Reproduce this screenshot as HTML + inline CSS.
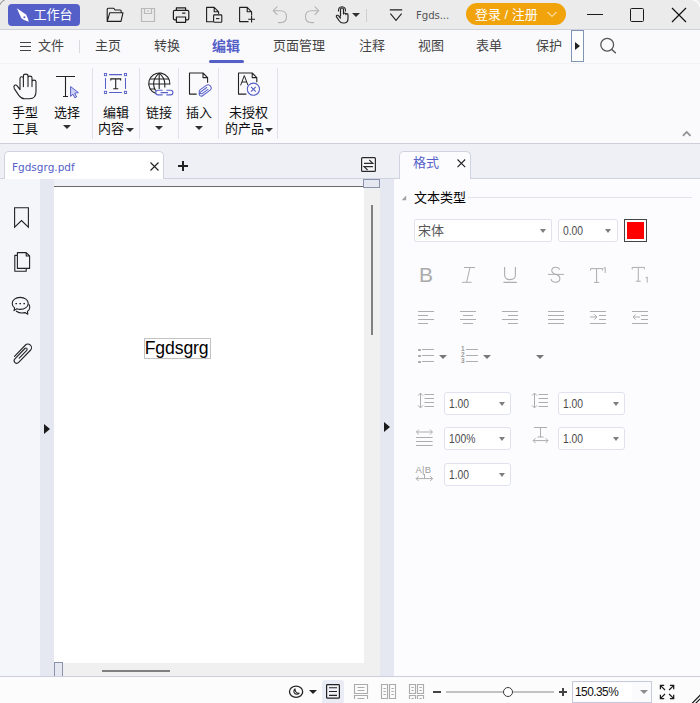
<!DOCTYPE html>
<html lang="zh-CN">
<head>
<meta charset="utf-8">
<title>Fgdsgrg.pdf</title>
<style>
*{box-sizing:border-box;margin:0;padding:0}
html,body{width:700px;height:703px;overflow:hidden;background:#fafafc}
body{position:relative;font-family:"Liberation Sans","Noto Sans CJK SC",sans-serif;font-size:13px;color:#222;-webkit-font-smoothing:antialiased}
.a{position:absolute}
.t{position:absolute;white-space:nowrap;line-height:1}
svg{position:absolute;overflow:visible}
.sep{position:absolute;width:1px;background:#e1e2ea}
.sel{position:absolute;height:23px;background:#fff;border:1px solid #e0e3ef;border-radius:3px}
.sel span{position:absolute;left:4px;top:5px;font-size:12px;line-height:1;color:#333}
.sel i{position:absolute;right:5px;top:9px;width:0;height:0;border-left:3.7px solid transparent;border-right:3.7px solid transparent;border-top:4.2px solid #7d7d7d}
.dd{position:absolute;width:0;height:0;border-left:4.1px solid transparent;border-right:4.1px solid transparent;border-top:4.5px solid #303030;margin-left:-0.4px}
.m{top:39px;font-size:13px;color:#444}
.r{font-size:13px;color:#111}
.sel span.n{font-size:12px;top:5px;left:3.5px;color:#4a4a4a;display:inline-block;transform:scaleX(0.86);transform-origin:left center}
</style>
</head>
<body>
<!-- ===== title bar ===== -->
<div class="a" id="titlebar" style="left:0;top:0;width:700px;height:29px;background:#ebebeb"></div>

<!-- window corner -->
<svg style="left:0;top:0" width="8" height="8" viewBox="0 0 8 8"><path d="M0 4.8 Q1 1 4.8 0" fill="none" stroke="#8a8a8a" stroke-width="1"/></svg>
<svg style="left:692px;top:0" width="8" height="8" viewBox="0 0 8 8"><path d="M1 0 Q7 1 8 7" fill="none" stroke="#fbfbfb" stroke-width="1.6"/></svg>
<!-- workbench button -->
<div class="a" style="left:8px;top:4px;width:72px;height:22px;background:#555fc8;border-radius:4px"></div>
<svg style="left:16px;top:8px" width="14" height="14" viewBox="0 0 14 14"><path d="M0.8 0.3 L10 6.6 Q12 10 12.8 13.8 Q8.6 12.8 5.4 10.2 Z" fill="#fff"/><circle cx="8.4" cy="9.2" r="1" fill="#555fc8"/></svg>
<div class="t" style="left:33.5px;top:7.5px;font-size:13px;color:#fff">工作台</div>
<!-- open folder -->
<svg style="left:106px;top:7px" width="18" height="16" viewBox="0 0 18 16"><path d="M1.2 14.4 V2.2 Q1.2 1.2 2.2 1.2 H7.8 L9 3 H14.2 Q15.2 3 15.2 4 V5.7 M1.2 14.4 L3.8 5.7 H17 L15 14.4 Z" fill="none" stroke="#1e1e1e" stroke-width="1.1" stroke-linejoin="round"/></svg>
<!-- save (disabled) -->
<svg style="left:140px;top:7px" width="16" height="16" viewBox="0 0 16 16"><path d="M1.5 1.5 H14.5 V14.5 H1.5 Z M4.5 1.5 V6.5 H11.5 V1.5 M7 4 H9" fill="none" stroke="#b9b9b9" stroke-width="1.2"/></svg>
<!-- print -->
<svg style="left:172px;top:7px" width="18" height="16" viewBox="0 0 18 16"><path d="M4.4 3.4 V0.8 H13.6 V3.4 M4.4 12.8 H2.8 Q1.4 12.8 1.4 11.4 V4.8 Q1.4 3.4 2.8 3.4 H15.4 Q16.8 3.4 16.8 4.8 V11.4 Q16.8 12.8 15.4 12.8 H13.6 M4.4 10 H13.6 V15.3 H4.4 Z M10.2 6.2 H13.4" fill="none" stroke="#1e1e1e" stroke-width="1.2" stroke-linejoin="round"/></svg>
<!-- doc with box -->
<svg style="left:205px;top:6px" width="18" height="18" viewBox="0 0 18 18"><path d="M8 15.8 H1.6 V1.4 H9.2 L13.6 5.8 V8 M9.2 1.4 V5.8 H13.6" fill="none" stroke="#1e1e1e" stroke-width="1.1" stroke-linejoin="round"/><rect x="8.6" y="8.9" width="8.2" height="7.4" rx="0.8" fill="none" stroke="#1e1e1e" stroke-width="1.1"/><path d="M11 12.6 H14.4" stroke="#1e1e1e" stroke-width="1.1"/></svg>
<!-- new doc -->
<svg style="left:238px;top:6px" width="18" height="18" viewBox="0 0 18 18"><path d="M10.5 15.6 H1.6 V1.4 H9.2 L13.6 5.8 V9.5 M9.2 1.4 V5.8 H13.6" fill="none" stroke="#1e1e1e" stroke-width="1.1" stroke-linejoin="round"/><path d="M13.6 9.8 V16.6 M10.2 13.2 H17" stroke="#1e1e1e" stroke-width="1.1"/></svg>
<!-- undo -->
<svg style="left:272px;top:5.6px" width="16" height="18" viewBox="0 0 16 18"><path d="M5 0.9 L1.2 4.7 L5 8.5 M1.4 4.7 H8.3 Q14.5 4.7 14.5 10.7 Q14.5 16.6 8.3 16.6 H6.4" fill="none" stroke="#b4b4b4" stroke-width="1.1" stroke-linejoin="round" stroke-linecap="round"/></svg>
<!-- redo -->
<svg style="left:304px;top:5.6px" width="16" height="18" viewBox="0 0 16 18"><path d="M11 0.9 L14.8 4.7 L11 8.5 M14.6 4.7 H7.7 Q1.5 4.7 1.5 10.7 Q1.5 16.6 7.7 16.6 H9.6" fill="none" stroke="#b4b4b4" stroke-width="1.1" stroke-linejoin="round" stroke-linecap="round"/></svg>
<!-- hand pointer -->
<svg style="left:335px;top:6px" width="15" height="18" viewBox="0 0 15 18"><path d="M5.5 10 V3.5 Q5.5 2 7 2 Q8.5 2 8.5 3.5 V8 M8.5 8 Q8.5 7 9.7 7 Q10.8 7 10.8 8.3 M10.8 8.6 Q10.8 7.7 11.9 7.7 Q13 7.7 13 9 V12.5 Q13 17 9 17 H8 Q5.5 17 4 14.5 L1.5 10.8 Q1 9.8 2 9.3 Q3 9 3.8 10 L5.5 12" fill="none" stroke="#222" stroke-width="1.2" stroke-linejoin="round" stroke-linecap="round"/><path d="M3.5 5.5 Q3 1 7 0.8 Q11 1 10.5 5.5" fill="none" stroke="#222" stroke-width="1.1"/></svg>
<div class="dd" style="left:352px;top:13px"></div>
<div class="sep" style="left:366px;top:9px;height:13px;background:#cfcfcf"></div>
<!-- customize -->
<svg style="left:388px;top:8px" width="15" height="14" viewBox="0 0 15 14"><path d="M1.8 1.9 H14.2 M2.4 5.6 L8 12.4 L13.6 5.6" fill="none" stroke="#222" stroke-width="1.1"/></svg>
<div class="t" style="left:416px;top:11px;font-size:10.2px;font-family:'DejaVu Sans','Liberation Sans',sans-serif;color:#555;letter-spacing:-0.1px">Fgds...</div>
<!-- login -->
<div class="a" style="left:466px;top:3px;width:100px;height:22px;background:#f0a30a;border-radius:11px"></div>
<div class="t" style="left:475px;top:7.5px;font-size:13px;color:#fff">登录 / 注册</div>
<svg style="left:547px;top:11px" width="10" height="7" viewBox="0 0 10 7"><path d="M0.5 1 L5 5.5 L9.5 1" fill="none" stroke="#fff" stroke-width="1"/></svg>
<!-- window controls -->
<div class="a" style="left:587px;top:13.6px;width:16.4px;height:1.1px;background:#1a1a1a"></div>
<div class="a" style="left:629.8px;top:8px;width:14.6px;height:14px;border:1.2px solid #1a1a1a;border-radius:1.6px"></div>
<svg style="left:671px;top:7px" width="16" height="16" viewBox="0 0 16 16"><path d="M1 1 L15 15 M15 1 L1 15" stroke="#111" stroke-width="1.2"/></svg>
<div class="a" style="left:0;top:29px;width:700px;height:1px;background:#cdd1dc"></div>

<!-- ===== menu bar + ribbon ===== -->
<div class="a" id="menubar" style="left:0;top:30px;width:700px;height:113px;background:#fafafc"></div>

<!-- menu bar -->
<div class="a" style="left:20px;top:42px;width:11px;height:1px;background:#444"></div>
<div class="a" style="left:20px;top:46px;width:11px;height:1px;background:#444"></div>
<div class="a" style="left:20px;top:50px;width:11px;height:1px;background:#444"></div>
<div class="t m" style="left:38px">文件</div>
<div class="sep" style="left:79px;top:40px;height:13px;background:#d9d9de"></div>
<div class="t m" style="left:95px">主页</div>
<div class="t m" style="left:154px">转换</div>
<div class="t" style="left:212px;top:38.5px;font-size:14px;font-weight:bold;color:#555fc8">编辑</div>
<div class="a" style="left:208.5px;top:59.5px;width:35.5px;height:3.2px;background:#555fc8;border-radius:1.6px"></div>
<div class="t m" style="left:273px">页面管理</div>
<div class="t m" style="left:359px">注释</div>
<div class="t m" style="left:418px">视图</div>
<div class="t m" style="left:476px">表单</div>
<div class="t m" style="left:536px">保护</div>
<div class="a" style="left:571px;top:30px;width:13px;height:32px;border:1px solid #8094b4;background:#fdfdfe"></div>
<div class="a" style="left:574.8px;top:41.5px;width:0;height:0;border-top:4.5px solid transparent;border-bottom:4.5px solid transparent;border-left:5.8px solid #222"></div>
<svg style="left:599px;top:37px" width="19" height="18" viewBox="0 0 19 18"><circle cx="8.2" cy="7.8" r="6.4" fill="none" stroke="#555" stroke-width="1.3"/><path d="M12.8 12.4 L16.4 15.8" stroke="#555" stroke-width="1.4" stroke-linecap="round"/></svg>

<!-- ribbon -->
<div class="a" style="left:0;top:63px;width:700px;height:1px;background:#f3f3f6"></div>
<div class="sep" style="left:92px;top:68px;height:71px"></div>
<div class="sep" style="left:139px;top:68px;height:71px"></div>
<div class="sep" style="left:178px;top:68px;height:71px"></div>
<div class="sep" style="left:218px;top:68px;height:71px"></div>
<div class="sep" style="left:277px;top:68px;height:71px"></div>

<!-- hand tool -->
<svg style="left:13px;top:73px" width="26" height="27" viewBox="0 0 26 27"><path d="M7 16.5 V5.6 Q7 3.8 8.7 3.8 Q10.4 3.8 10.4 5.6 V13.6 M10.4 5.5 V2.9 Q10.4 1.1 12.7 1.1 Q15 1.1 15 2.9 V13.6 M15 4.8 Q15 3.1 17 3.1 Q19 3.1 19 4.8 V13.6 M19 8.7 Q19 7.1 21 7.1 Q23 7.1 23 8.7 V18.5 Q23 25.8 16.5 25.8 H11.5 Q8.4 25.8 5.8 22.4 L1.3 15.6 Q0.2 13.4 1.6 12.3 Q3.2 11.5 4.4 13.1 L7 16.6" fill="none" stroke="#222" stroke-width="1.1" stroke-linejoin="round" stroke-linecap="round"/></svg>
<div class="t r" style="left:12px;top:106px">手型</div>
<div class="t r" style="left:12px;top:122px">工具</div>
<!-- select -->
<svg style="left:55px;top:74px" width="26" height="26" viewBox="0 0 26 26"><path d="M1 2.5 H20 M10.5 2.5 V22.5 M8 22.5 H13" fill="none" stroke="#222" stroke-width="1.1"/><path d="M15.6 12.6 L23.4 18.6 L19.8 19.2 L21.6 23 L19.8 23.8 L18 20.2 L15.6 22.4 Z" fill="#cfd3f6" stroke="#555fc8" stroke-width="1" stroke-linejoin="round"/></svg>
<div class="t r" style="left:54px;top:106px">选择</div>
<div class="dd" style="left:63px;top:125px"></div>
<!-- edit content -->
<svg style="left:103px;top:72px" width="26" height="23" viewBox="0 0 26 23"><g fill="none" stroke="#555fc8" stroke-width="1.05"><rect x="1.4" y="1.5" width="2.2" height="2.2" stroke-width="0.9"/><rect x="21.4" y="1.5" width="2.2" height="2.2" stroke-width="0.9"/><rect x="1.4" y="19.3" width="2.2" height="2.2" stroke-width="0.9"/><rect x="21.4" y="19.3" width="2.2" height="2.2" stroke-width="0.9"/><path d="M6.1 2.6 H19 M6.1 20.4 H19 M2.5 6 V17.1 M22.5 6 V17.1"/></g><path d="M7.8 8.6 V6.9 H17.6 V8.6 M12.7 6.9 V16.8 M10.2 16.8 H15.3" fill="none" stroke="#222" stroke-width="1.1"/></svg>
<div class="t r" style="left:103px;top:106px">编辑</div>
<div class="t r" style="left:98px;top:122px">内容</div>
<div class="dd" style="left:126px;top:128px"></div>
<!-- link -->
<svg style="left:147px;top:72px" width="27" height="25" viewBox="0 0 27 25"><g fill="none" stroke="#222" stroke-width="1.1"><path d="M9 21.6 A10.6 10.6 0 1 1 22.9 12.5"/><path d="M12.2 1.2 Q6.6 6 6.6 11.8 Q6.6 16 8.6 18.6"/><path d="M12.2 1.2 Q17.8 6 17.8 11.8 V15.6"/><path d="M12.2 1.2 V17"/><path d="M2.8 7 H21.6 M1.6 12 H22.8 M2.8 17 H8"/></g><g fill="none" stroke="#555fc8" stroke-width="1.1"><path d="M15.6 18.3 H11 A2.3 2.3 0 0 0 11 22.9 H15.6 M19.4 18.3 H23.6 A2.3 2.3 0 0 1 23.6 22.9 H19.4 M13.6 20.6 H21"/></g></svg>
<div class="t r" style="left:146px;top:106px">链接</div>
<div class="dd" style="left:155px;top:126px"></div>
<!-- insert -->
<svg style="left:188px;top:72px" width="25" height="26" viewBox="0 0 25 26"><path d="M8.7 22.1 H1.5 V1 H15 L19.6 5.6 V10.8 M15 1 V5.6 H19.6" fill="none" stroke="#222" stroke-width="1.1" stroke-linejoin="round"/><g transform="translate(16.6 18.4) rotate(-36)" fill="none" stroke="#555fc8" stroke-width="1"><path d="M3.8 -1.1 H-4.8 A2.1 2.1 0 0 0 -4.8 3.1 H4.2 A3.1 3.1 0 0 0 4.2 -3.1 H-3.4 A1 1 0 0 0 -3.4 1.1 H3.8"/></g></svg>
<div class="t r" style="left:186px;top:106px">插入</div>
<div class="dd" style="left:195px;top:126px"></div>
<!-- unlicensed -->
<svg style="left:237px;top:72px" width="25" height="26" viewBox="0 0 25 26"><path d="M9.4 22.1 H1.5 V1 H15.2 L19.8 5.6 V10.2 M15.2 1 V5.6 H19.8" fill="none" stroke="#222" stroke-width="1.1" stroke-linejoin="round"/><path d="M3.6 13.4 L7.3 3.6 L11 13.4 M4.9 10 H9.7" fill="none" stroke="#222" stroke-width="1"/><circle cx="16.4" cy="17.2" r="6.1" fill="#fafafc" stroke="#555fc8" stroke-width="1.1"/><path d="M14 14.8 L18.8 19.6 M18.8 14.8 L14 19.6" stroke="#555fc8" stroke-width="1.1"/></svg>
<div class="t r" style="left:229px;top:106px">未授权</div>
<div class="t r" style="left:225px;top:122px">的产品</div>
<div class="dd" style="left:265px;top:128px"></div>
<!-- collapse chevron -->
<svg style="left:681px;top:129px" width="12" height="8" viewBox="0 0 12 8"><path d="M1.9 6.9 L5.7 3 L9.5 6.9" fill="none" stroke="#8f8f8f" stroke-width="1.7"/></svg>

<!-- ===== tab strip ===== -->
<div class="a" style="left:0;top:143px;width:700px;height:1px;background:#cdd0dc"></div>
<div class="a" id="tabstrip" style="left:0;top:144px;width:700px;height:34px;background:#eff0f5"></div>
<div class="a" style="left:0;top:178px;width:700px;height:1px;background:#cfd3df"></div>
<!-- doc tab -->
<div class="a" style="left:4px;top:151px;width:160px;height:28px;background:#fff;border:1px solid #cfd3df;border-bottom:none;border-radius:5px 5px 0 0"></div>
<div class="t" style="left:12px;top:162px;font-size:10.5px;font-family:'DejaVu Sans','Liberation Sans',sans-serif;color:#555fc8">Fgdsgrg.pdf</div>
<svg style="left:150px;top:162px" width="9" height="9" viewBox="0 0 9 9"><path d="M0.5 0.5 L8.5 8.5 M8.5 0.5 L0.5 8.5" stroke="#222" stroke-width="1.1"/></svg>
<div class="a" style="left:178px;top:165px;width:10px;height:2px;background:#222"></div>
<div class="a" style="left:182px;top:161px;width:2px;height:10px;background:#222"></div>
<!-- swap icon -->
<svg style="left:361px;top:157px" width="16" height="16" viewBox="0 0 16 16"><rect x="0.6" y="0.6" width="13.8" height="13.8" rx="0.9" fill="#f7f7fa" stroke="#2a2a2a" stroke-width="1.2"/><path d="M3 6.4 H11.9 L8.3 3 M11.9 9.6 H3 L6.6 13" fill="none" stroke="#2a2a2a" stroke-width="1.1"/></svg>
<!-- format tab -->
<div class="a" style="left:399px;top:151px;width:72px;height:28px;background:#fcfcfe;border:1px solid #cfd3df;border-bottom:none;border-radius:5px 5px 0 0"></div>
<div class="t" style="left:413px;top:155.5px;font-size:13px;color:#555fc8">格式</div>
<svg style="left:457px;top:159px" width="9" height="9" viewBox="0 0 9 9"><path d="M0.5 0.5 L8.2 8.2 M8.2 0.5 L0.5 8.2" stroke="#222" stroke-width="1.1"/></svg>

<!-- ===== main ===== -->
<div class="a" id="leftbar" style="left:0;top:179px;width:40px;height:497px;background:#f5f6fa"></div>
<div class="a" style="left:40px;top:179px;width:14px;height:497px;background:#e6e8f1"></div>
<div class="a" style="left:54px;top:179px;width:310px;height:7px;background:#f0f1f6"></div>
<div class="a" style="left:54px;top:186px;width:310px;height:1px;background:#6a6a6a"></div>
<div class="a" id="page" style="left:54px;top:187px;width:310px;height:476px;background:#fff"></div>
<div class="a" style="left:364px;top:179px;width:16px;height:497px;background:#f0f0f0"></div>
<div class="a" style="left:363px;top:179px;width:17px;height:9px;background:#e6e8f1;border:1px solid #8a92ac"></div>
<div class="a" style="left:371px;top:205px;width:2px;height:130px;background:#808080"></div>
<div class="a" style="left:380px;top:179px;width:14px;height:497px;background:#e6e8f1"></div>
<div class="a" id="rpanel" style="left:394px;top:179px;width:306px;height:497px;background:#fcfcfe"></div>
<!-- bottom scrollbar -->
<div class="a" style="left:54px;top:663px;width:310px;height:13px;background:#f0f0f0"></div>
<div class="a" style="left:54px;top:662px;width:9px;height:15px;background:#e6e8f1;border:1px solid #8a92ac;border-bottom:none"></div>
<div class="a" style="left:102px;top:670px;width:68px;height:2px;background:#808080"></div>
<!-- splitter arrows -->
<div class="a" style="left:44px;top:424px;width:0;height:0;border-top:5px solid transparent;border-bottom:5px solid transparent;border-left:6px solid #1a1a1a"></div>
<div class="a" style="left:384px;top:422px;width:0;height:0;border-top:5px solid transparent;border-bottom:5px solid transparent;border-left:6px solid #1a1a1a"></div>
<!-- left sidebar icons -->
<svg style="left:13px;top:206px" width="18" height="23" viewBox="0 0 18 23"><path d="M1.6 1.8 H15.4 V21.2 L8.5 14.6 L1.6 21.2 Z" fill="none" stroke="#222" stroke-width="1.1" stroke-linejoin="miter"/></svg>
<svg style="left:13px;top:251px" width="19" height="22" viewBox="0 0 19 22"><path d="M4.4 4.4 H1.8 V20.2 H13.2 V17.6 M4.4 1.6 H13.2 L16.6 5 V17.4 H4.4 Z M13.2 1.6 V5 H16.6" fill="none" stroke="#222" stroke-width="1.1" stroke-linejoin="round"/></svg>
<svg style="left:11px;top:296px" width="21" height="20" viewBox="0 0 21 20"><path d="M9.2 1.4 C13.8 1.4 17.2 4 17.2 7.4 C17.2 10.8 13.8 13.4 9.2 13.4 C8 13.4 6.8 13.2 5.8 12.8 L3 14.6 L3.6 11.8 C2.2 10.6 1.2 9.2 1.2 7.4 C1.2 4 4.6 1.4 9.2 1.4 Z" fill="none" stroke="#222" stroke-width="1.1" stroke-linejoin="round"/><path d="M18 8.4 C19.4 11 18.6 13.8 16.4 15.4 L16.8 18.2 L14 16.6 C11 17.4 7.6 16.8 5.4 15.2" fill="none" stroke="#222" stroke-width="1.1" stroke-linejoin="round" stroke-linecap="round"/><path d="M4.4 7.6 H6 M8.4 7.6 H10 M12.4 7.6 H14" stroke="#222" stroke-width="1.4"/></svg>
<svg style="left:12px;top:342px" width="21" height="22" viewBox="0 0 21 22"><g transform="translate(10.3 11.5) rotate(-46)" fill="none" stroke="#222" stroke-width="1.1" stroke-linecap="round"><path d="M-7.5 -3.6 H8 A3.6 3.6 0 0 1 8 3.6 H-9 A2.6 2.6 0 0 1 -9 -1.6 H5.4 A1.3 1.3 0 0 1 5.4 1.0 H-5.5"/></g></svg>
<!-- text box on page -->
<div class="a" style="left:144px;top:338px;width:66.5px;height:21px;border:1px solid #c2c2c2;background:#fff"></div>
<div class="t" style="left:144.7px;top:338.6px;font-size:17.6px;color:#000;line-height:19px;letter-spacing:-0.1px">Fgdsgrg</div>

<!-- ===== right panel content ===== -->
<svg style="left:401px;top:195px" width="6" height="6" viewBox="0 0 6 6"><path d="M5.2 0.6 V5.2 H0.6 Z" fill="#a2a2a2"/></svg>
<div class="t" style="left:414px;top:190.5px;font-size:13px;color:#000">文本类型</div>
<div class="a" style="left:468px;top:197px;width:224px;height:1px;background:#e3e4ea"></div>
<div class="sel" style="left:414px;top:219px;width:138px;border-radius:2px"><span style="font-size:13px;left:3px;top:4px;color:#555">宋体</span><i style="right:5px"></i></div>
<div class="sel" style="left:558px;top:219px;width:60px"><span class="n">0.00</span><i style="right:6px"></i></div>
<div class="a" style="left:624px;top:219px;width:23px;height:23px;border:1px solid #444;background:#fff"></div>
<div class="a" style="left:627px;top:222px;width:17px;height:17px;background:#ff0000"></div>
<div class="t" style="left:419px;top:264px;font-size:21px;line-height:22px;color:#ababab">B</div>
<svg style="left:460px;top:265px" width="18" height="20" viewBox="0 0 18 20"><path d="M4 2.5 H15 M2 17.3 H11.6 M10 2.5 L6.6 17.3" fill="none" stroke="#adadad" stroke-width="1"/></svg>
<svg style="left:501px;top:265px" width="18" height="20" viewBox="0 0 18 20"><path d="M3.6 2 V9.4 Q3.6 14.6 9 14.6 Q14.4 14.6 14.4 9.4 V2 M2.4 17.4 H15.8" fill="none" stroke="#adadad" stroke-width="1.1"/></svg>
<svg style="left:546px;top:265px" width="20" height="20" viewBox="0 0 20 20"><path d="M13.6 4.6 Q12.8 2.2 9.6 2.2 Q5.8 2.2 5.8 5.6 Q5.8 8.2 9.6 9.4 Q13.9 10.4 13.9 13.6 Q13.9 17.2 9.6 17.2 Q5.6 17.2 5 14.2" fill="none" stroke="#adadad" stroke-width="1.1"/><path d="M2 9.4 H18" stroke="#adadad" stroke-width="1"/></svg>
<svg style="left:589px;top:265px" width="20" height="20" viewBox="0 0 20 20"><path d="M1.6 5.6 V3.6 H13.6 V5.6 M7.6 3.6 V17.4 M5 17.4 H10.2" fill="none" stroke="#adadad" stroke-width="1"/><path d="M14.6 3.4 L16.2 2.4 V8" fill="none" stroke="#adadad" stroke-width="1"/></svg>
<svg style="left:631px;top:265px" width="20" height="20" viewBox="0 0 20 20"><path d="M1.2 4.4 V2.4 H13.4 V4.4 M7.3 2.4 V16.2 M4.8 16.2 H9.8" fill="none" stroke="#adadad" stroke-width="1"/><path d="M14.6 13 L16.2 12 V17.6" fill="none" stroke="#adadad" stroke-width="1"/></svg>
<div class="a" style="left:418px;top:311px;width:16px;height:1px;background:#adadad"></div>
<div class="a" style="left:460px;top:311px;width:16px;height:1px;background:#adadad"></div>
<div class="a" style="left:502px;top:311px;width:16px;height:1px;background:#adadad"></div>
<div class="a" style="left:548px;top:311px;width:16px;height:1px;background:#adadad"></div>
<div class="a" style="left:418px;top:315px;width:10px;height:1px;background:#adadad"></div>
<div class="a" style="left:463px;top:315px;width:10px;height:1px;background:#adadad"></div>
<div class="a" style="left:508px;top:315px;width:10px;height:1px;background:#adadad"></div>
<div class="a" style="left:548px;top:315px;width:16px;height:1px;background:#adadad"></div>
<div class="a" style="left:418px;top:319px;width:16px;height:1px;background:#adadad"></div>
<div class="a" style="left:460px;top:319px;width:16px;height:1px;background:#adadad"></div>
<div class="a" style="left:502px;top:319px;width:16px;height:1px;background:#adadad"></div>
<div class="a" style="left:548px;top:319px;width:16px;height:1px;background:#adadad"></div>
<div class="a" style="left:418px;top:323px;width:10px;height:1px;background:#adadad"></div>
<div class="a" style="left:463px;top:323px;width:10px;height:1px;background:#adadad"></div>
<div class="a" style="left:508px;top:323px;width:10px;height:1px;background:#adadad"></div>
<div class="a" style="left:548px;top:323px;width:16px;height:1px;background:#adadad"></div>
<div class="a" style="left:590px;top:311px;width:16px;height:1px;background:#adadad"></div>
<div class="a" style="left:590px;top:323px;width:16px;height:1px;background:#adadad"></div>
<div class="a" style="left:632px;top:311px;width:16px;height:1px;background:#adadad"></div>
<div class="a" style="left:632px;top:323px;width:16px;height:1px;background:#adadad"></div>
<div class="a" style="left:599px;top:315px;width:7px;height:1px;background:#adadad"></div>
<div class="a" style="left:599px;top:319px;width:7px;height:1px;background:#adadad"></div>
<div class="a" style="left:641px;top:315px;width:7px;height:1px;background:#adadad"></div>
<div class="a" style="left:641px;top:319px;width:7px;height:1px;background:#adadad"></div>
<svg style="left:590px;top:313px" width="8" height="8" viewBox="0 0 8 8"><path d="M0 4 H7 M4.4 1.4 L7 4 L4.4 6.6" fill="none" stroke="#adadad" stroke-width="1"/></svg>
<svg style="left:632px;top:313px" width="8" height="8" viewBox="0 0 8 8"><path d="M8 4 H1 M3.6 1.4 L1 4 L3.6 6.6" fill="none" stroke="#adadad" stroke-width="1"/></svg>
<div class="a" style="left:418px;top:348.5px;width:2.8px;height:2.8px;border-radius:50%;background:#a0a0a0"></div>
<div class="a" style="left:422px;top:349px;width:12px;height:1px;background:#adadad"></div>
<div class="a" style="left:466px;top:349px;width:12px;height:1px;background:#adadad"></div>
<div class="a" style="left:418px;top:354.5px;width:2.8px;height:2.8px;border-radius:50%;background:#a0a0a0"></div>
<div class="a" style="left:422px;top:355px;width:12px;height:1px;background:#adadad"></div>
<div class="a" style="left:466px;top:355px;width:12px;height:1px;background:#adadad"></div>
<div class="a" style="left:418px;top:360.5px;width:2.8px;height:2.8px;border-radius:50%;background:#a0a0a0"></div>
<div class="a" style="left:422px;top:361px;width:12px;height:1px;background:#adadad"></div>
<div class="a" style="left:466px;top:361px;width:12px;height:1px;background:#adadad"></div>
<div class="t" style="left:461px;top:345.5px;font-size:6.5px;line-height:6px;color:#9a9a9a;font-weight:bold">1<br>2<br>3</div>
<div class="dd" style="left:439px;top:355px;border-top-color:#777"></div>
<div class="dd" style="left:483px;top:355px;border-top-color:#777"></div>
<div class="dd" style="left:536px;top:355px;border-top-color:#777"></div>
<div class="sel" style="left:444px;top:392px;width:67px"><span class="n">1.00</span><i></i></div>
<div class="sel" style="left:558px;top:392px;width:67px"><span class="n">1.00</span><i></i></div>
<div class="sel" style="left:444px;top:427px;width:67px"><span class="n">100%</span><i></i></div>
<div class="sel" style="left:558px;top:427px;width:67px"><span class="n">1.00</span><i></i></div>
<div class="sel" style="left:444px;top:463px;width:67px"><span class="n">1.00</span><i></i></div>
<svg style="left:417px;top:392px" width="18" height="17" viewBox="0 0 18 17"><path d="M3.5 1.2 V15.8 M1 3.6 L3.5 1.1 L6 3.6 M1 13.4 L3.5 15.9 L6 13.4" fill="none" stroke="#adadad" stroke-width="1"/><path d="M7.5 2.5 H17 M7.5 6.5 H17 M7.5 10.5 H17 M7.5 14.5 H17" stroke="#adadad" stroke-width="1"/></svg>
<svg style="left:531px;top:391.5px" width="18" height="17" viewBox="0 0 18 17"><path d="M3.5 1.2 V15.8 M1 3.6 L3.5 1.1 L6 3.6 M1 13.4 L3.5 15.9 L6 13.4" fill="none" stroke="#adadad" stroke-width="1"/><path d="M7.5 2.5 H17 M7.5 6.5 H17 M7.5 10.5 H17 M7.5 14.5 H17" stroke="#adadad" stroke-width="1"/></svg>
<svg style="left:415px;top:428px" width="19" height="19" viewBox="0 0 19 19"><path d="M1.4 4 H17.4 M3.8 1.6 L1.4 4 L3.8 6.4 M15 1.6 L17.4 4 L15 6.4" fill="none" stroke="#adadad" stroke-width="1"/><path d="M1 9.5 H17.6 M1 13.5 H17.6 M1 17.5 H17.6" stroke="#adadad" stroke-width="1"/></svg>
<svg style="left:532px;top:426px" width="18" height="18" viewBox="0 0 18 18"><path d="M2 1.5 H15 M8.5 1.5 V11 M5.4 11 H11.6" fill="none" stroke="#adadad" stroke-width="1"/><path d="M1.2 14.6 H16 M3.6 12.2 L1.2 14.6 L3.6 17 M13.6 12.2 L16 14.6 L13.6 17" fill="none" stroke="#adadad" stroke-width="1"/></svg>
<div class="t" style="left:415.5px;top:464.5px;font-size:9.5px;color:#9c9c9c;letter-spacing:0.2px">A|B</div>
<svg style="left:415px;top:474px" width="19" height="9" viewBox="0 0 19 9"><path d="M9.5 0 V4.6 M1.2 4.6 H17.6 M3.6 2.2 L1.2 4.6 L3.6 7 M15.2 2.2 L17.6 4.6 L15.2 7" fill="none" stroke="#adadad" stroke-width="1"/></svg>

<!-- ===== status bar ===== -->
<div class="a" style="left:0;top:676px;width:700px;height:1px;background:#cdd0dc"></div>
<div class="a" id="status" style="left:0;top:677px;width:700px;height:26px;background:#fcfcfd"></div>


<!-- status bar content -->
<svg style="left:288px;top:684px" width="16" height="16" viewBox="0 0 16 16"><ellipse cx="8.1" cy="7.7" rx="6.6" ry="5.6" fill="none" stroke="#222" stroke-width="1.3"/><path d="M7 4.8 Q4.6 7.6 7.2 9.8 Q9.6 11 11.2 9.2 Q8.6 9.2 7.6 7.4 Q7 6.2 7 4.8 Z" fill="none" stroke="#222" stroke-width="1.1" stroke-linejoin="round"/></svg>
<div class="dd" style="left:309px;top:690px;border-top-color:#222"></div>
<div class="a" style="left:322px;top:680px;width:22px;height:23px;background:#e9ebf5;border-radius:3px 3px 0 0"></div>
<svg style="left:326px;top:683px" width="15" height="17" viewBox="0 0 15 17"><rect x="0.6" y="1.6" width="12.8" height="13.6" rx="0.8" fill="#f1f2f9" stroke="#222" stroke-width="1.2"/><path d="M3 4.7 H11 M3 8.5 H11 M3 12.3 H11" stroke="#222" stroke-width="1.15"/></svg>
<svg style="left:353px;top:684px" width="16" height="16" viewBox="0 0 16 16"><path d="M1.5 0.5 H14.5 V9.5 H1.5 Z M4.5 3.5 H11.5 M4.5 6.5 H11.5 M1.5 15 V11.5 H14.5 V15 M4.5 14.5 H11.5" fill="none" stroke="#ababab" stroke-width="1.15"/></svg>
<svg style="left:381px;top:684px" width="16" height="16" viewBox="0 0 16 16"><path d="M0.5 0.5 H6.5 V14.5 H0.5 Z M8.5 0.5 H14.5 V14.5 H8.5 Z M2.4 4.5 H4.8 M2.4 7.5 H4.8 M2.4 10.5 H4.8 M10.4 4.5 H12.8 M10.4 7.5 H12.8 M10.4 10.5 H12.8" fill="none" stroke="#ababab" stroke-width="1.15"/></svg>
<svg style="left:409px;top:684px" width="16" height="16" viewBox="0 0 16 16"><path d="M0.5 0.5 H6.5 V9.5 H0.5 Z M8.5 0.5 H14.5 V9.5 H8.5 Z M2.4 3.5 H4.8 M2.4 6.5 H4.8 M10.4 3.5 H12.8 M10.4 6.5 H12.8 M0.5 15 V11.5 H6.5 V15 M8.5 15 V11.5 H14.5 V15 M2.4 14.5 H4.8 M10.4 14.5 H12.8" fill="none" stroke="#ababab" stroke-width="1.15"/></svg>
<div class="a" style="left:433px;top:691px;width:8px;height:2px;background:#444"></div>
<div class="a" style="left:446px;top:691px;width:108px;height:2px;background:#c2c2c2"></div>
<div class="a" style="left:503px;top:687px;width:10px;height:10px;border-radius:50%;border:1px solid #3c3c3c;background:#fff"></div>
<div class="a" style="left:559px;top:691px;width:8px;height:2px;background:#444"></div>
<div class="a" style="left:562px;top:688px;width:2px;height:8px;background:#444"></div>
<div class="a" style="left:572px;top:681px;width:80px;height:22px;background:#fbfbfd;border:1px solid #c6cadc"></div>
<div class="a" style="left:574px;top:683px;width:58px;height:17.5px;background:#fff"></div>
<div class="t" style="left:575px;top:685.5px;font-size:12.5px;color:#111;letter-spacing:-0.55px;transform:scaleX(0.95);transform-origin:left center">150.35%</div>
<div class="dd" style="left:640.4px;top:690px;border-top-color:#8c8c8c"></div>
<svg style="left:659px;top:684px" width="17" height="16" viewBox="0 0 17 16"><path d="M1.4 5.2 V1.4 H5.2 M1.6 1.6 L6 6 M10.9 1.4 H14.7 V5.2 M14.5 1.6 L10.1 6 M1.4 10.8 V14.6 H5.2 M1.6 14.4 L6 10 M10.9 14.6 H14.7 V10.8 M14.5 14.4 L10.1 10" fill="none" stroke="#1c1c1c" stroke-width="1.25"/></svg>
<svg style="left:688px;top:693px" width="12" height="10" viewBox="0 0 12 10"><path d="M4 10.4 L12.4 2 M7.6 10.4 L12.4 5.6" stroke="#151515" stroke-width="1.2"/></svg>
</body>
</html>
